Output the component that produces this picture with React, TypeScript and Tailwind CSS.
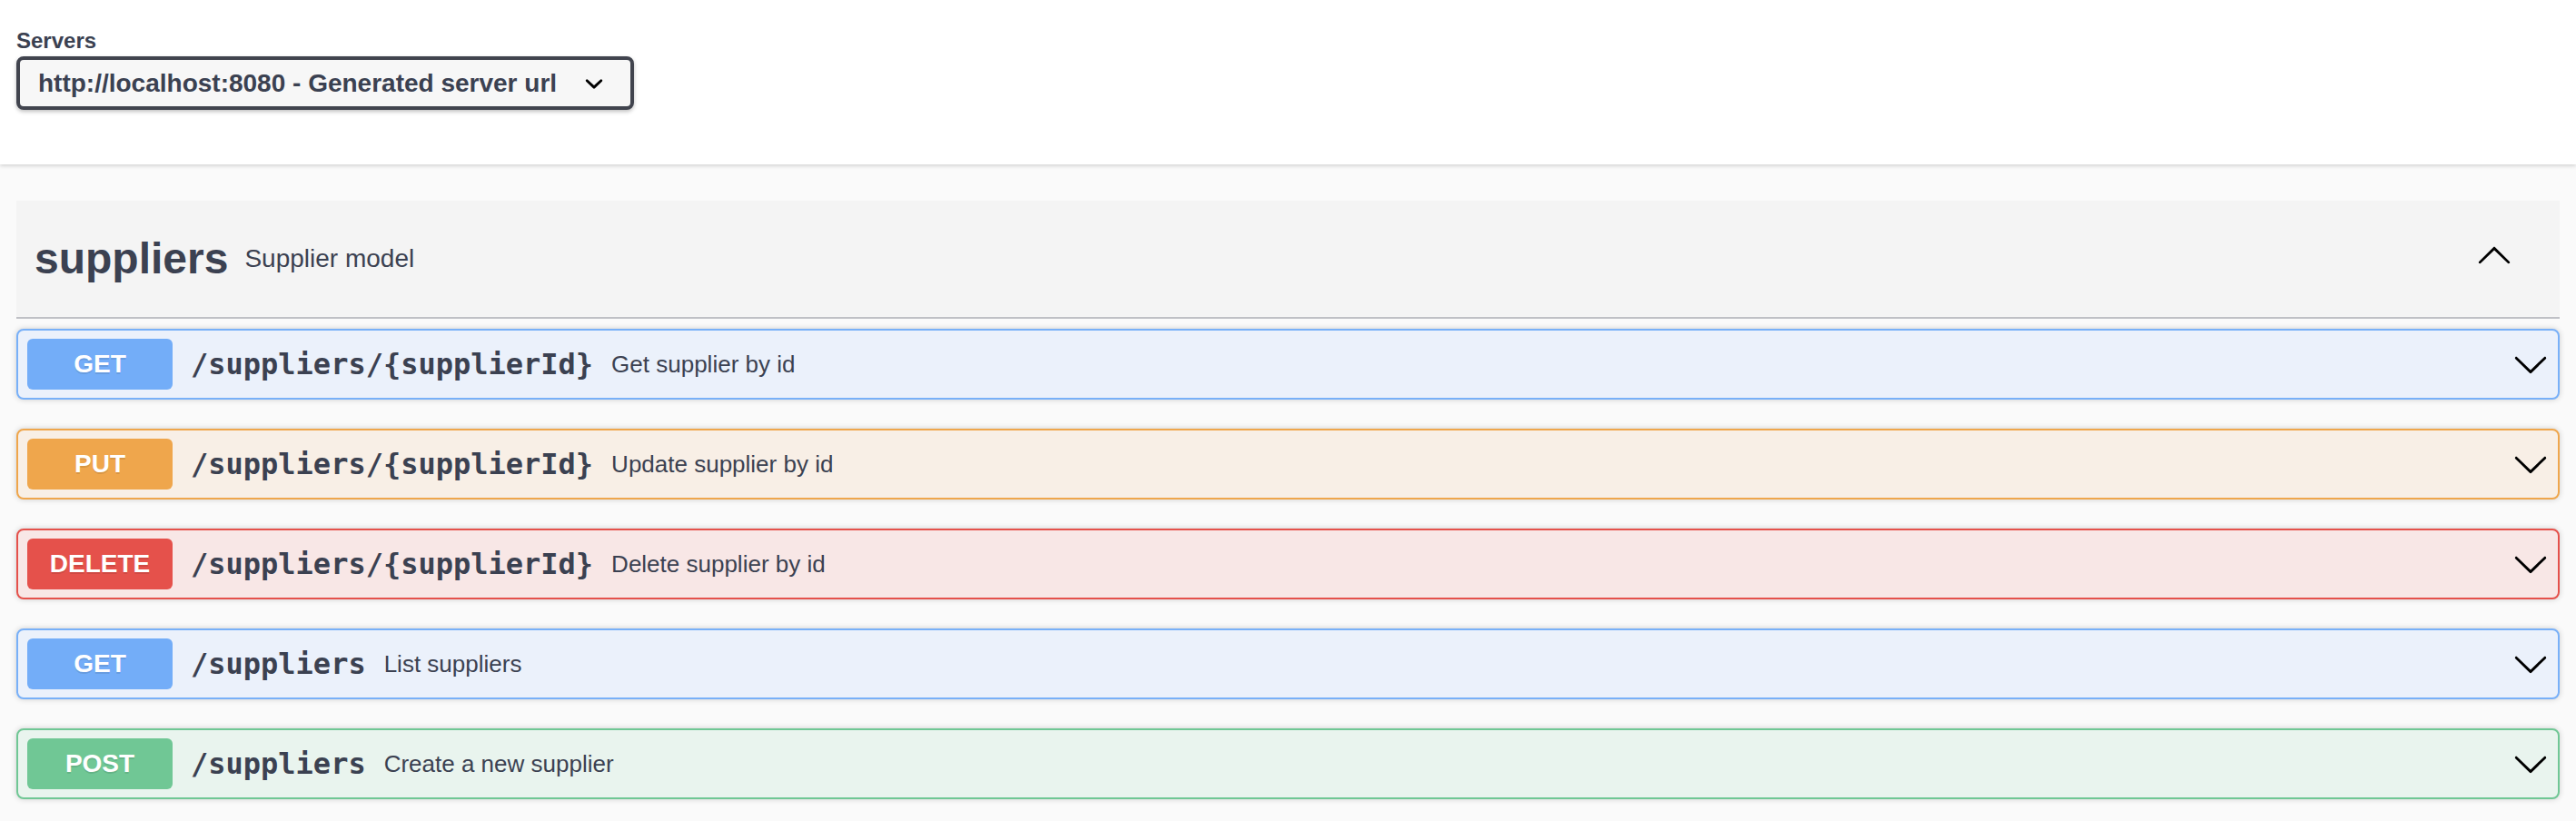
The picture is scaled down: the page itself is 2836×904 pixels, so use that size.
import React from "react";

type Op = {
  method: string;
  path: string;
  desc: string;
  border: string;
  bg: string;
  badge: string;
};

const ops: Op[] = [
  { method: "GET", path: "/suppliers/{supplierId}", desc: "Get supplier by id", border: "border-[#78b0f8]", bg: "bg-[#ebf1fb]", badge: "bg-[#73adf8]" },
  { method: "PUT", path: "/suppliers/{supplierId}", desc: "Update supplier by id", border: "border-[#efa64c]", bg: "bg-[#f8efe6]", badge: "bg-[#efa64c]" },
  { method: "DELETE", path: "/suppliers/{supplierId}", desc: "Delete supplier by id", border: "border-[#e5514b]", bg: "bg-[#f8e7e6]", badge: "bg-[#e5514b]" },
  { method: "GET", path: "/suppliers", desc: "List suppliers", border: "border-[#78b0f8]", bg: "bg-[#ebf1fb]", badge: "bg-[#73adf8]" },
  { method: "POST", path: "/suppliers", desc: "Create a new supplier", border: "border-[#70c795]", bg: "bg-[#e9f4ee]", badge: "bg-[#70c795]" },
];

function ArrowDown() {
  return (
    <svg width="40" height="40" viewBox="0 0 20 20" className="shrink-0">
      <path
        fill="#000"
        d="M 17.418 6.109 C 17.69 5.841 18.127 5.841 18.397 6.109 C 18.667 6.377 18.668 6.81 18.397 7.078 L 10.489 14.908 C 10.219 15.176 9.782 15.176 9.51 14.908 L 1.602 7.078 C 1.332 6.81 1.332 6.377 1.602 6.109 C 1.873 5.841 2.311 5.841 2.581 6.109 L 10 13.25 L 17.418 6.109 Z"
      />
    </svg>
  );
}

function ArrowUp() {
  return (
    <svg width="40" height="40" viewBox="0 0 20 20" className="shrink-0">
      <path
        fill="#000"
        d="M 17.418 14.908 C 17.69 15.176 18.127 15.176 18.397 14.908 C 18.667 14.64 18.668 14.207 18.397 13.939 L 10.489 6.109 C 10.219 5.841 9.782 5.841 9.51 6.109 L 1.602 13.939 C 1.332 14.207 1.332 14.64 1.602 14.908 C 1.873 15.176 2.311 15.176 2.581 14.908 L 10 7.767 L 17.418 14.908 Z"
      />
    </svg>
  );
}

function SelectArrow() {
  return (
    <svg width="40" height="40" viewBox="0 0 20 20" className="shrink-0">
      <path
        fill="#000"
        d="M13.418 7.859a.695.695 0 01.978 0 .68.68 0 010 .969l-3.908 3.83a.697.697 0 01-.979 0l-3.908-3.83a.68.68 0 010-.969.695.695 0 01.978 0L10 11l3.418-3.141z"
      />
    </svg>
  );
}

export default function App() {
  return (
    <div className="min-h-[904px] bg-[#fafafa] font-['Liberation_Sans',Arial,sans-serif] text-[#3b4151]">
      <div className="bg-white px-[18px] pt-[31px] pb-[60px] shadow-[0_2px_4px_0_rgba(0,0,0,0.15)]">
        <div className="text-[24px] leading-[28px] font-bold">Servers</div>
        <div className="mt-[3px] flex h-[59px] w-[680px] items-center justify-between rounded-[8px] border-[4px] border-[#41444e] bg-[#f7f7f7] pl-[20px] pr-[20px] shadow-[0_2px_4px_0_rgba(0,0,0,0.25)]">
          <span className="text-[28px] leading-[32px] font-bold whitespace-nowrap">
            http://localhost:8080 - Generated server url
          </span>
          <SelectArrow />
        </div>
      </div>

      <div className="mt-[40px] px-[18px]">
        <div className="mb-[11px] flex h-[130px] items-center border-b-[2px] border-[#bfc0c5] bg-[#f4f4f4] pl-[20px] pr-[52px]">
          <span className="text-[48px] leading-[56px] font-bold">suppliers</span>
          <span className="ml-[18px] flex-1 text-[28px] leading-[32px]">Supplier model</span>
          <div className="pb-[10px]">
            <ArrowUp />
          </div>
        </div>

        {ops.map((op, i) => (
          <div
            key={i}
            className={`mb-[32px] flex h-[78px] items-center rounded-[8px] border-[2px] ${op.border} ${op.bg} pl-[10px] pr-[10px] shadow-[0_0_6px_rgba(0,0,0,0.19)]`}
          >
            <span
              className={`flex h-[56px] w-[160px] shrink-0 items-center justify-center rounded-[6px] ${op.badge} text-[28px] font-bold text-white [text-shadow:0_2px_0_rgba(0,0,0,0.1)]`}
            >
              {op.method}
            </span>
            <span className="px-[20px] font-['DejaVu_Sans_Mono',monospace] text-[32px] leading-[40px] font-bold">
              {op.path}
            </span>
            <span className="flex-1 text-[26px] leading-[30px]">{op.desc}</span>
            <ArrowDown />
          </div>
        ))}
      </div>
    </div>
  );
}
